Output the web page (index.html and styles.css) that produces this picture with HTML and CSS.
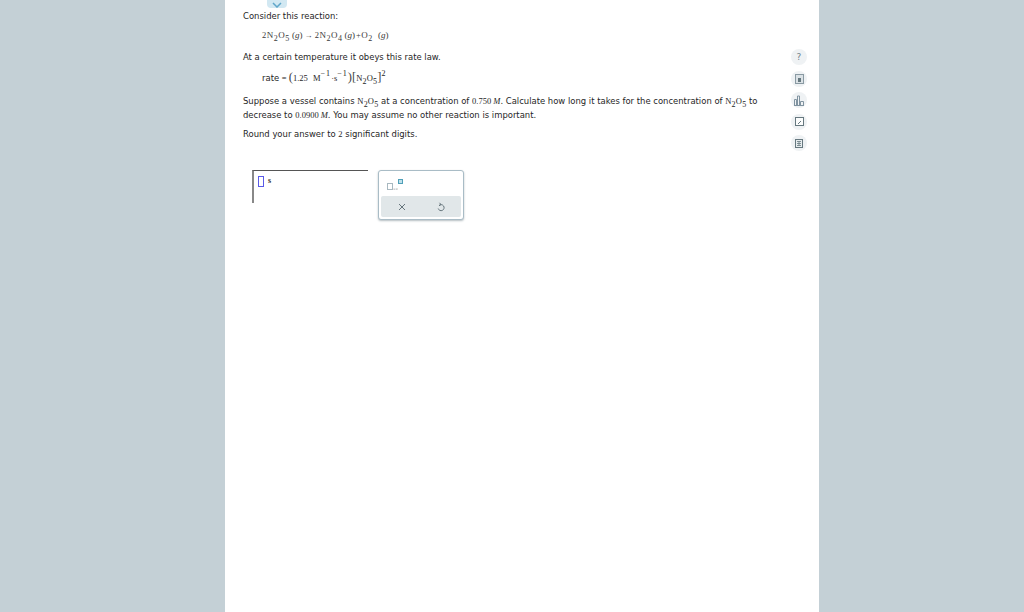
FILE: index.html
```html
<!DOCTYPE html>
<html lang="en">
<head>
<meta charset="utf-8">
<title>Reaction kinetics question</title>
<link rel="stylesheet" href="styles.css">
</head>
<body>
<main class="sheet">
  <section class="question">
    <div class="tab"><svg width="10" height="6" viewBox="0 0 10 6"><path d="M1 1l4 4 4-4" fill="none" stroke="#5fa6c9" stroke-width="1.5"/></svg></div>
    <p class="line l1">Consider this reaction:</p>
    <p class="line l2 indent m">2<span class="ml">N<sub>2</sub>O<sub>5</sub></span> <span class="p">(<i>g</i>)</span> <span class="arrow">→</span> 2<span class="ml">N<sub>2</sub>O<sub>4</sub></span> <span class="p">(<i>g</i>)</span><span class="plus">+</span><span class="ml">O<sub>2</sub></span> <span class="p last">(<i>g</i>)</span></p>
    <p class="line l3">At a certain temperature it obeys this rate law.</p>
    <p class="line l4 indent">rate <span class="m">= <span class="big">(</span>1.25 &nbsp;<span class="unit-m">M</span><sup class="neg">−1</sup>·s<sup class="neg">−1</sup><span class="big">)</span><span class="big">[</span><span class="ml">N<sub>2</sub>O<sub>5</sub></span><span class="big">]</span><sup>2</sup></span></p>
    <p class="line l5">Suppose a vessel contains <span class="m ml">N<sub>2</sub>O<sub>5</sub></span> at a concentration of <span class="m">0.750 <i>M</i></span>. Calculate how long it takes for the concentration of <span class="m ml">N<sub>2</sub>O<sub>5</sub></span> to</p>
    <p class="line l6">decrease to <span class="m">0.0900 <i>M</i></span>. You may assume no other reaction is important.</p>
    <p class="line l7">Round your answer to <span class="m">2</span> significant digits.</p>
    <div class="answer">
      <div class="field"><span class="caret"></span><span class="unit">s</span></div>
      <div class="popup">
        <div class="tools"><span class="box"></span><span class="dot">×10</span><span class="exp"></span></div>
        <div class="actions">
          <svg width="8" height="8" viewBox="0 0 8 8"><path d="M1 1l6 6M7 1L1 7" stroke="#66757c" stroke-width="1"/></svg>
          <svg width="8" height="10" viewBox="0 0 8 10"><path d="M2 3.500A3 3 0 1 1 1.200 6.500M2.500 .8L4 2.500 2 3.800" fill="none" stroke="#66757c" stroke-width="1"/></svg>
        </div>
      </div>
    </div>
  </section>
  <aside class="rail">
    <div class="chip"><span class="help">?</span></div>
    <div class="chip"><svg width="9" height="10" viewBox="0 0 9 10"><rect x=".5" y=".5" width="8" height="9" fill="#dbe2e6" stroke="#8a9aa3"/><rect x="3" y="4" width="3" height="4" fill="#66787f"/></svg></div>
    <div class="chip"><svg width="10" height="11" viewBox="0 0 10 11"><path d="M.5 10V4.500h2V10M3.500 10V1h2v9M6.500 10V6.500h3V10M0 10.500h10" fill="none" stroke="#8093a0"/></svg></div>
    <div class="chip"><svg width="9" height="9" viewBox="0 0 9 9"><rect x=".5" y=".5" width="8" height="8" fill="#fbfcfc" stroke="#66787f"/><path d="M3 7l3-3" stroke="#66787f"/></svg></div>
    <div class="chip"><svg width="8" height="9" viewBox="0 0 8 9"><rect x=".5" y=".5" width="7" height="8" fill="#e6ecee" stroke="#66787f"/><path d="M2 2.500h4M2 4.500h4M4 2.500v4M2 6.500h4" stroke="#66787f" stroke-width=".8"/></svg></div>
  </aside>
</main>
</body>
</html>
```
FILE: styles.css
```css
html, body {
  margin: 0;
  height: 100%;
}
body {
  background: #c4d0d6;
  display: flex;
  justify-content: flex-start;
  overflow: hidden;
  font-family: "DejaVu Sans", Verdana, sans-serif;
  font-size: 8.45px;
  color: #262626;
}
.sheet {
  margin-left: 225px;
  width: 594px;
  height: 612px;
  background: #fff;
  display: flex;
}
.question {
  width: 566px;
  padding-left: 18px;
  box-sizing: border-box;
  flex: none;
}
.tab {
  width: 20px;
  height: 8px;
  margin-left: 24px;
  background: #d2e8f2;
  border-radius: 0 0 4px 4px;
  display: flex;
  justify-content: center;
  align-items: flex-end;
  overflow: hidden;
}
.line {
  margin: 0;
  height: 14px;
  line-height: 14px;
  white-space: nowrap;
}
.l1 { margin-top: 1px; }
.l2 { margin-top: 4px; height: 16px; line-height: 16px; color: #3a3a3a; }
.l3 { margin-top: 7px; }
.l4 { margin-top: 6px; height: 16px; line-height: 16px; }
.l5 { margin-top: 8px; }
.l6 { margin-top: 0; }
.l7 { margin-top: 5px; }
.indent { padding-left: 19px; }
.m {
  font-family: "Liberation Serif", "Times New Roman", serif;
  font-size: 8.5px;
}
.ml {
  letter-spacing: .2px;
  font-family: "Liberation Serif", "Times New Roman", serif;
  font-size: 8.5px;
}
.l2 .ml {
  letter-spacing: .5px;
  font-size: 9px;
  margin-left: .5px;
}
.p { font-size: 9px; }
.plus { margin-left: 1px; }
.last { margin-left: 3px; }
.arrow { font-size: 8px; }
.big { font-size: 12.5px; line-height: 10px; color: #444; }
.unit-m { margin-left: 1px; }
sub, sup {
  line-height: 0;
}
sub { vertical-align: -3px; font-size: 8px; }
sup { vertical-align: 5px; font-size: 8px; }
.neg { letter-spacing: 1px; }
.answer {
  display: flex;
  align-items: flex-start;
  margin-top: 29px;
  margin-left: 9px;
}
.field {
  width: 116px;
  height: 33px;
  border-top: 1px solid #555;
  border-left: 2px solid #888;
  display: flex;
  align-items: flex-start;
  gap: 4px;
  padding: 5px 0 0 4px;
  box-sizing: border-box;
  font-family: "Liberation Serif", serif;
  font-size: 8px;
}
.caret {
  width: 6px;
  height: 11px;
  border: 1px solid #5a5ae8;
  box-sizing: border-box;
}
.unit { line-height: 9px; font-weight: 700; color: #333; }
.popup {
  margin-left: 10px;
  width: 86px;
  height: 50px;
  border: 1px solid #a9bcc6;
  border-radius: 3px;
  background: #fff;
  box-shadow: 0 1px 2px rgba(90, 110, 120, .45);
  box-sizing: border-box;
  padding: 2px;
  display: flex;
  flex-direction: column;
  justify-content: space-between;
}
.tools {
  height: 20px;
  padding: 9px 0 0 6px;
  box-sizing: border-box;
  display: flex;
  align-items: flex-start;
}
.box {
  width: 6px;
  height: 7px;
  border: 1px solid #a8b8c0;
  box-sizing: border-box;
  margin-top: 1px;
}
.dot {
  font-size: 3px;
  color: #7b8a92;
  margin-top: 6px;
  line-height: 3px;
  width: 5px;
  overflow: hidden;
}
.exp {
  width: 5px;
  height: 5px;
  border: 1px solid #4f9fb8;
  background: #bfe0ea;
  box-sizing: border-box;
  margin-top: -3px;
}
.actions {
  height: 21px;
  background: #e1e7e9;
  border-radius: 2px;
  display: flex;
  align-items: center;
  justify-content: space-around;
  padding: 0 1px;
}
.rail {
  flex: none;
  width: 16px;
  padding-top: 49px;
  display: flex;
  flex-direction: column;
  gap: 5.5px;
}
.chip {
  width: 16px;
  height: 16px;
  flex: none;
  border-radius: 50%;
  background: #eff2f4;
  display: flex;
  align-items: center;
  justify-content: center;
}
.help {
  color: #70838c;
  font-size: 9px;
}
```
